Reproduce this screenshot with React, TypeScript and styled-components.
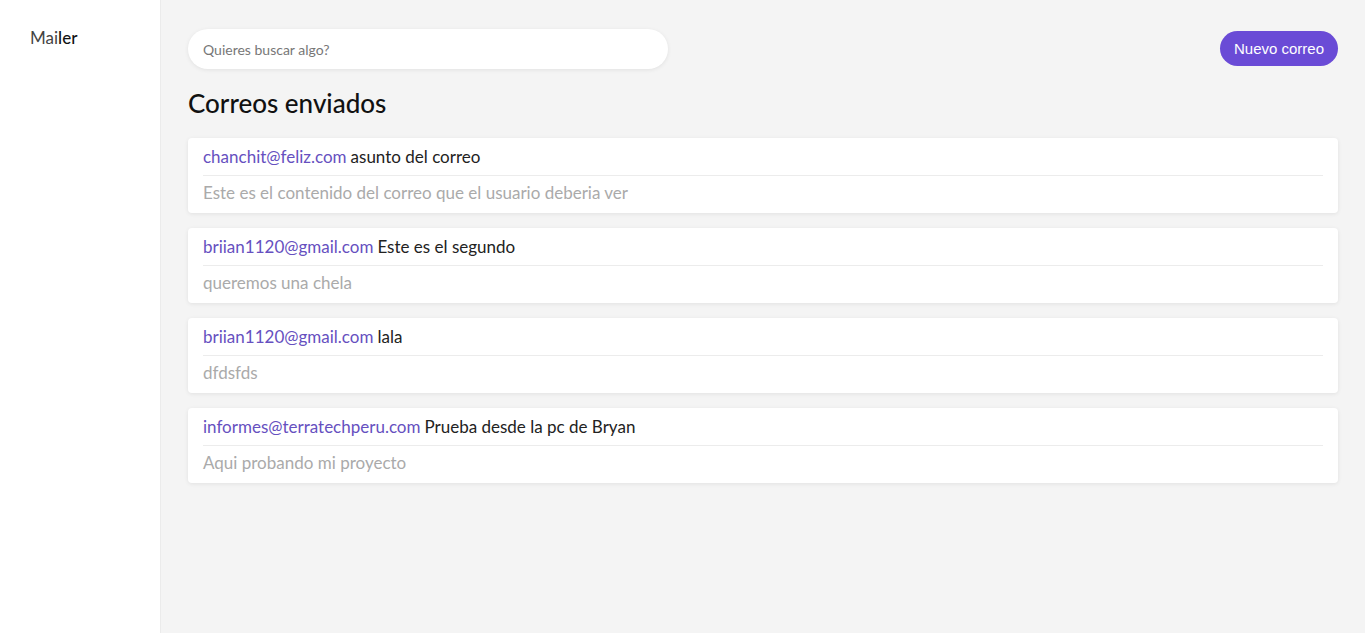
import React from 'react'
import styled, { createGlobalStyle } from 'styled-components'

const GlobalStyle = createGlobalStyle`
    html, body {
        margin: 0;
        padding: 0;
        background: #f4f4f4;
        font-family: Lato, "Open Sans", sans-serif;
    }
`;

const Layout = styled.div`
    display: flex;
    min-height: 633px;
`;

const Sidebar = styled.aside`
    width: 161px;
    flex-shrink: 0;
    background: #ffffff;
    border-right: 1px solid #ebebeb;
    padding: 27px 0 0 30px;
    box-sizing: border-box;
`;

const Logo = styled.div`
    font-size: 17px;
    color: #444;

    b {
        color: #111;
        font-weight: 500;
    }
`;

const Main = styled.main`
    flex: 1;
    padding: 29px 27px 20px 27px;
    box-sizing: border-box;
`;

const Toolbar = styled.div`
    display: flex;
    align-items: center;
    justify-content: space-between;
`;

const Search = styled.input`
    width: 480px;
    height: 40px;
    box-sizing: border-box;
    border: none;
    border-radius: 20px;
    background: #fff;
    padding: 0 15px;
    font-family: inherit;
    font-size: 14px;
    color: #333;
    box-shadow: 0 1px 4px rgba(0, 0, 0, 0.08);
    outline: none;

    &::placeholder {
        color: #777;
    }
`;

const NewButton = styled.button`
    height: 35px;
    padding: 0 14px;
    margin-top: -2px;
    border: none;
    border-radius: 18px;
    background: #6a4bd6;
    color: #fff;
    font-family: "Liberation Sans", Arial, sans-serif;
    font-size: 15px;
    cursor: pointer;
`;

const Title = styled.h2`
    margin: 18px 0 19px 0;
    font-size: 26px;
    font-weight: 500;
    color: #111;
`;

const List = styled.div`
    display: flex;
    flex-direction: column;
    gap: 15px;
`;

const Card = styled.div`
    background: #fff;
    border-radius: 4px;
    padding: 0 15px;
    box-shadow: 0 1px 4px rgba(0, 0, 0, 0.08);
`;

const Header = styled.div`
    height: 37px;
    display: flex;
    align-items: center;
    border-bottom: 1px solid #ececec;
    font-size: 17px;
    color: #222;
    gap: 4px;
`;

const From = styled.span`
    color: #6650c0;
`;

const Body = styled.div`
    height: 37px;
    box-sizing: border-box;
    padding-top: 7px;
    font-size: 17px;
    line-height: 20px;
    color: #aaa;
`;

const correos = [
    { from: 'chanchit@feliz.com', subject: 'asunto del correo', body: 'Este es el contenido del correo que el usuario deberia ver' },
    { from: 'briian1120@gmail.com', subject: 'Este es el segundo', body: 'queremos una chela' },
    { from: 'briian1120@gmail.com', subject: 'lala', body: 'dfdsfds' },
    { from: 'informes@terratechperu.com', subject: 'Prueba desde la pc de Bryan', body: 'Aqui probando mi proyecto' },
];

const App: React.FC = () => {
    return (
        <>
            <GlobalStyle />
            <Layout>
                <Sidebar>
                    <Logo>Mai<b>ler</b></Logo>
                </Sidebar>
                <Main>
                    <Toolbar>
                        <Search placeholder="Quieres buscar algo?" />
                        <NewButton>Nuevo correo</NewButton>
                    </Toolbar>
                    <Title>Correos enviados</Title>
                    <List>
                        {correos.map((c, i) => (
                            <Card key={i}>
                                <Header>
                                    <From>{c.from}</From>
                                    <span>{c.subject}</span>
                                </Header>
                                <Body>{c.body}</Body>
                            </Card>
                        ))}
                    </List>
                </Main>
            </Layout>
        </>
    );
};

export default App;
